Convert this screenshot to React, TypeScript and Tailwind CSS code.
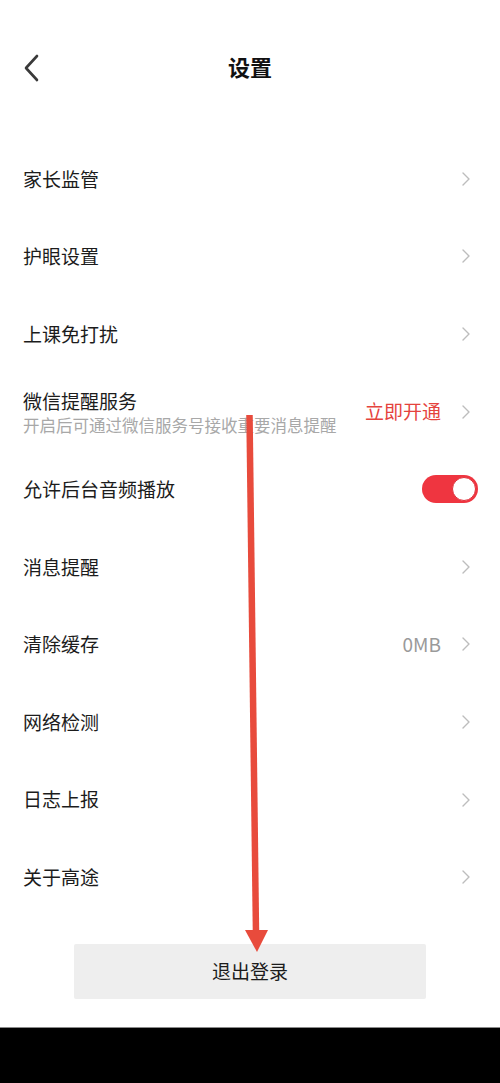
import React from "react";

const font = { fontFamily: '"Noto Sans CJK SC", "Noto Sans", sans-serif' };

function Chevron() {
  return (
    <svg width="10" height="16" viewBox="0 0 10 16" fill="none" className="shrink-0">
      <path d="M2 2l6 6-6 6" stroke="#bdbdbd" strokeWidth="1.4" strokeLinecap="round" strokeLinejoin="round" />
    </svg>
  );
}

function Row({ label, right }: { label: string; right?: React.ReactNode }) {
  return (
    <div className="flex h-[77.6px] items-center justify-between pl-[23px] pr-[29px]">
      <span className="text-[19px] text-[#1c1c1c]">{label}</span>
      <div className="flex items-center gap-[20px]">
        {right}
        <Chevron />
      </div>
    </div>
  );
}

function Toggle() {
  return (
    <div className="flex h-[28px] w-[56px] items-center justify-end rounded-full bg-[#ef3540] pr-[2px]">
      <div className="h-[24px] w-[24px] rounded-full border border-[#e0303a] bg-white" />
    </div>
  );
}

export default function App() {
  return (
    <div className="relative flex h-[1083px] w-[500px] flex-col bg-white" style={font}>
      <header className="relative flex h-[140px] items-start justify-center pt-[50px]">
        <svg width="18" height="28" viewBox="0 0 18 28" className="absolute left-[22px] top-[54px]" fill="none">
          <path d="M15 2L4 14l11 12" stroke="#3a3a3a" strokeWidth="2.6" strokeLinecap="round" strokeLinejoin="round" />
        </svg>
        <h1 className="text-[22px] font-bold text-[#111]">设置</h1>
      </header>

      <div className="flex flex-col">
        <Row label="家长监管" />
        <Row label="护眼设置" />
        <Row label="上课免打扰" />
        <div className="flex h-[77.6px] items-center justify-between pl-[23px] pr-[29px]">
          <div className="flex flex-col">
            <span className="text-[19px] leading-[27px] text-[#1c1c1c]">微信提醒服务</span>
            <span className="text-[16.5px] leading-[23px] text-[#a8a8a8]">开启后可通过微信服务号接收重要消息提醒</span>
          </div>
          <div className="flex items-center gap-[20px]">
            <span className="text-[19px] text-[#e5433d]">立即开通</span>
            <Chevron />
          </div>
        </div>
        <div className="flex h-[77.6px] items-center justify-between pl-[23px] pr-[22px]">
          <span className="text-[19px] text-[#1c1c1c]">允许后台音频播放</span>
          <Toggle />
        </div>
        <Row label="消息提醒" />
        <Row label="清除缓存" right={<span className="text-[19px] text-[#9a9a9a]">0MB</span>} />
        <Row label="网络检测" />
        <Row label="日志上报" />
        <Row label="关于高途" />
      </div>

      <div className="mt-[28px] flex justify-center">
        <button className="h-[55px] w-[352px] rounded-[2px] bg-[#eeeeee] text-[19px] text-[#1c1c1c]">退出登录</button>
      </div>

      <div className="mt-auto h-[56px] border-t border-[#8a8a8a] bg-black" />

      {/* annotation arrow pointing down to the logout button */}
      <svg className="pointer-events-none absolute left-0 top-0" width="500" height="1083" viewBox="0 0 500 1083">
        <line x1="249.5" y1="415" x2="256" y2="934" stroke="#e84b3c" strokeWidth="6.5" />
        <polygon points="245,930 268,930 257,952" fill="#e84b3c" />
      </svg>
    </div>
  );
}
